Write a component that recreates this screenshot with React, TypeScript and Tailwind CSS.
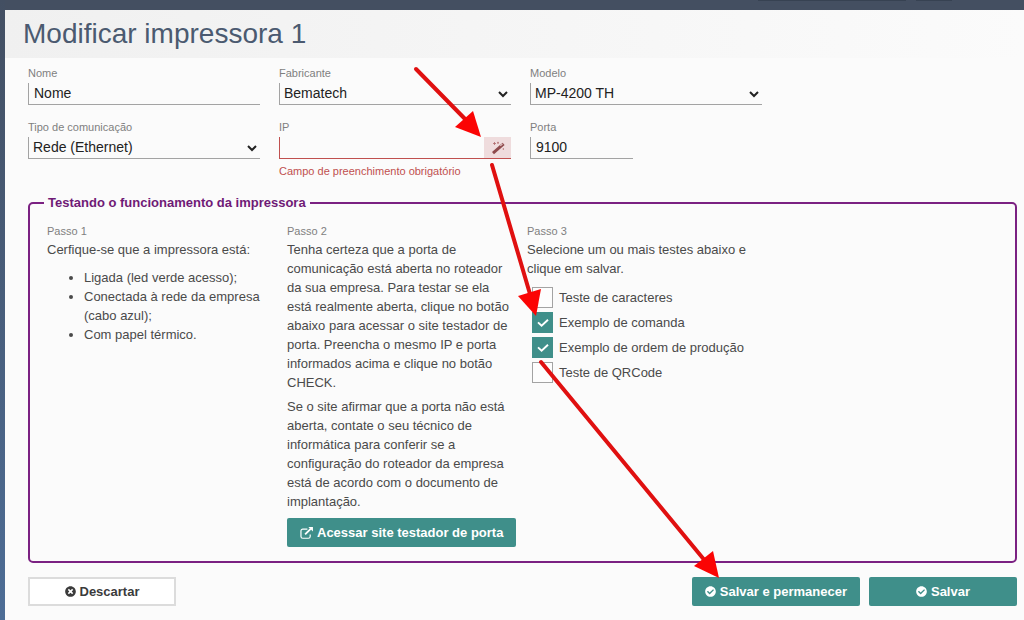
import { useState } from "react";
import type { ReactNode } from "react";
import { FaCheckCircle, FaTimesCircle } from "react-icons/fa";

const labelClass = "block text-[11px] leading-4 text-[#7f7f7f]";
const fieldClass =
  "h-[22px] w-full border-b border-l border-[#a3a3a3] bg-transparent pb-0.5 text-sm leading-5 text-[#222] outline-none";
const primaryClass =
  "flex h-[29px] items-center justify-center gap-1 rounded-[2px] bg-[#3f8f8a] text-[13px] font-bold text-white";

const TESTS = [
  { id: "caracteres", label: "Teste de caracteres", checked: false },
  { id: "comanda", label: "Exemplo de comanda", checked: true },
  { id: "ordem", label: "Exemplo de ordem de produção", checked: true },
  { id: "qrcode", label: "Teste de QRCode", checked: false },
];

function SelectField({ id, label, value }: { id: string; label: string; value: string }) {
  return (
    <div>
      <label htmlFor={id} className={labelClass}>
        {label}
      </label>
      <select id={id} defaultValue={value} className={`mt-0.5 block ${fieldClass}`}>
        <option>{value}</option>
      </select>
    </div>
  );
}

function Step({ title, children }: { title: string; children: ReactNode }) {
  return (
    <section className="text-[13px] leading-[19px] text-[#4a4a4a]">
      <h2 className="text-[11px] leading-[18px] text-[#7f7f7f]">{title}</h2>
      {children}
    </section>
  );
}

function ExternalLinkIcon() {
  return (
    <svg width="13" height="12" viewBox="0 0 14 13" fill="none" stroke="currentColor" aria-hidden="true">
      <path d="M8 2.2H3A2 2 0 0 0 1 4.2v6a2 2 0 0 0 2 2h6a2 2 0 0 0 2-2V8" strokeWidth="1.3" />
      <path d="M5.5 8L11.5 2" strokeWidth="2" />
      <path d="M9 0h5v5z" fill="currentColor" stroke="none" />
    </svg>
  );
}

function WandIcon() {
  return (
    <svg width="14" height="14" viewBox="0 0 14 14" fill="none" aria-hidden="true">
      <path d="M2 12.2L12.6 2.8" stroke="#8e4a4c" strokeWidth="3" />
      <path d="M9.3 4.9l2.2-2" stroke="#e6c9ca" strokeWidth="1.1" />
      <path d="M3.5 1v3M2 2.5h3M7 0.8v2M6 1.8h2M12.3 7v2" stroke="#b06a6c" strokeWidth="0.8" />
    </svg>
  );
}

function CheckIcon() {
  return (
    <svg
      className="pointer-events-none absolute"
      width="12"
      height="10"
      viewBox="0 0 12 10"
      fill="none"
      stroke="#fff"
      strokeWidth="1.9"
      aria-hidden="true"
    >
      <path d="M1 4.4L4.6 7.8L11 1.8" />
    </svg>
  );
}

function Arrows() {
  return (
    <svg
      className="pointer-events-none absolute top-0 left-0"
      width="1024"
      height="620"
      viewBox="0 0 1024 620"
      aria-hidden="true"
    >
      <g stroke="#e01010" strokeWidth="4" strokeLinecap="round">
        <path d="M416 69L468 122" />
        <path d="M492 165L530 294" />
        <path d="M541 362L706 562" />
      </g>
      <g fill="#fb0404">
        <path d="M481 137L455 127L473 111z" />
        <path d="M536 316L518 296L541 289z" />
        <path d="M719 578L694 566L713 551z" />
      </g>
    </svg>
  );
}

export default function App() {
  const [tests, setTests] = useState(TESTS);

  const toggle = (id: string) =>
    setTests(tests.map((t) => (t.id === id ? { ...t, checked: !t.checked } : t)));

  return (
    <div className="relative flex min-h-screen flex-col bg-linear-to-b from-[#434f62] to-[#4d6d96] pl-[5px] font-['Liberation_Sans',Arial,sans-serif]">
      <div className="flex h-[10px] justify-end gap-[10px] bg-[#444f61] pr-[72px]">
        <span className="h-px w-[148px] bg-[#374252]" />
        <span className="h-px w-[36px] bg-[#374252]" />
      </div>

      <main className="flex-1 bg-[#fbfbfb]">
        <header className="flex h-12 items-center bg-linear-to-r from-[#f0f0f0] to-[#fbfbfb] pl-[18px]">
          <h1 className="text-[28px] leading-8 text-[#4b5a70]">Modificar impressora 1</h1>
        </header>

        <form className="pt-[7px] pr-[7px] pl-[23px]" onSubmit={(e) => e.preventDefault()}>
          <div className="grid grid-cols-4 gap-x-[19px] gap-y-[14px] pr-1">
            <div>
              <label htmlFor="nome" className={labelClass}>
                Nome
              </label>
              <input id="nome" defaultValue="Nome" className={`mt-0.5 block pl-[5px] ${fieldClass}`} />
            </div>
            <SelectField id="fabricante" label="Fabricante" value="Bematech" />
            <SelectField id="modelo" label="Modelo" value="MP-4200 TH" />
            <div />

            <SelectField id="tipo" label="Tipo de comunicação" value="Rede (Ethernet)" />
            <div>
              <label htmlFor="ip" className={labelClass}>
                IP
              </label>
              <div className="mt-0.5 flex h-[22px] border-b border-l border-b-[#c0504f] border-l-[#c0504f]">
                <input
                  id="ip"
                  aria-describedby="ip-error"
                  className="min-w-0 flex-1 bg-transparent px-1 text-sm outline-none"
                />
                <button
                  type="button"
                  aria-label="Detectar IP"
                  className="flex w-[27px] items-center justify-center bg-[#efdcdd]"
                >
                  <WandIcon />
                </button>
              </div>
              <p id="ip-error" className="mt-1 text-[11px] leading-4 whitespace-nowrap text-[#c0504f]">
                Campo de preenchimento obrigatório
              </p>
            </div>
            <div>
              <label htmlFor="porta" className={labelClass}>
                Porta
              </label>
              <div className="mt-0.5 w-[103px]">
                <input id="porta" defaultValue="9100" className={`block pl-[5px] ${fieldClass}`} />
              </div>
            </div>
          </div>

          <fieldset className="mt-4 rounded-[5px] border-2 border-[#7b2182] pr-6 pb-[14px] pl-[17px]">
            <legend className="-ml-[3px] px-1 text-[13px] leading-4 font-bold text-[#6f1a76]">
              Testando o funcionamento da impressora
            </legend>
            <div className="grid grid-cols-4 gap-x-4 pt-[11px]">
              <Step title="Passo 1">
                <p>Cerfique-se que a impressora está:</p>
                <ul className="mt-[9px] list-disc pl-[37px]">
                  <li>Ligada (led verde acesso);</li>
                  <li>Conectada à rede da empresa (cabo azul);</li>
                  <li>Com papel térmico.</li>
                </ul>
              </Step>
              <Step title="Passo 2">
                <p>
                  Tenha certeza que a porta de comunicação está aberta no roteador da sua empresa.
                  Para testar se ela está realmente aberta, clique no botão abaixo para acessar o
                  site testador de porta. Preencha o mesmo IP e porta informados acima e clique no
                  botão CHECK.
                </p>
                <p className="mt-[5px]">
                  Se o site afirmar que a porta não está aberta, contate o seu técnico de
                  informática para conferir se a configuração do roteador da empresa está de acordo
                  com o documento de implantação.
                </p>
                <a href="#testador" className={`mt-[7px] w-max px-[13px] ${primaryClass}`}>
                  <ExternalLinkIcon />
                  Acessar site testador de porta
                </a>
              </Step>
              <Step title="Passo 3">
                <p>Selecione um ou mais testes abaixo e clique em salvar.</p>
                <div className="mt-[9px] flex flex-col gap-1 pl-[5px]">
                  {tests.map((t) => (
                    <label key={t.id} className="flex items-center gap-[6px]">
                      <span className="relative flex h-[21px] w-[21px] items-center justify-center">
                        <input
                          type="checkbox"
                          checked={t.checked}
                          onChange={() => toggle(t.id)}
                          className="h-[21px] w-[21px] appearance-none border border-[#a3a3a3] bg-[#fdfdfd] checked:border-[#3f8f8a] checked:bg-[#3f8f8a]"
                        />
                        {t.checked && <CheckIcon />}
                      </span>
                      {t.label}
                    </label>
                  ))}
                </div>
              </Step>
            </div>
          </fieldset>

          <div className="mt-[14px] flex gap-[9px] pb-[13px]">
            <button
              type="button"
              className="mr-auto flex h-[29px] w-[148px] items-center justify-center gap-1 border-2 border-[#dcdcdc] bg-white text-[13px] font-bold text-[#3b3b3b]"
            >
              <FaTimesCircle size={11} />
              Descartar
            </button>
            <button type="submit" className={`px-[13px] ${primaryClass}`}>
              <FaCheckCircle size={11} />
              Salvar e permanecer
            </button>
            <button type="submit" className={`w-[148px] ${primaryClass}`}>
              <FaCheckCircle size={11} />
              Salvar
            </button>
          </div>
        </form>
      </main>

      <Arrows />
    </div>
  );
}
